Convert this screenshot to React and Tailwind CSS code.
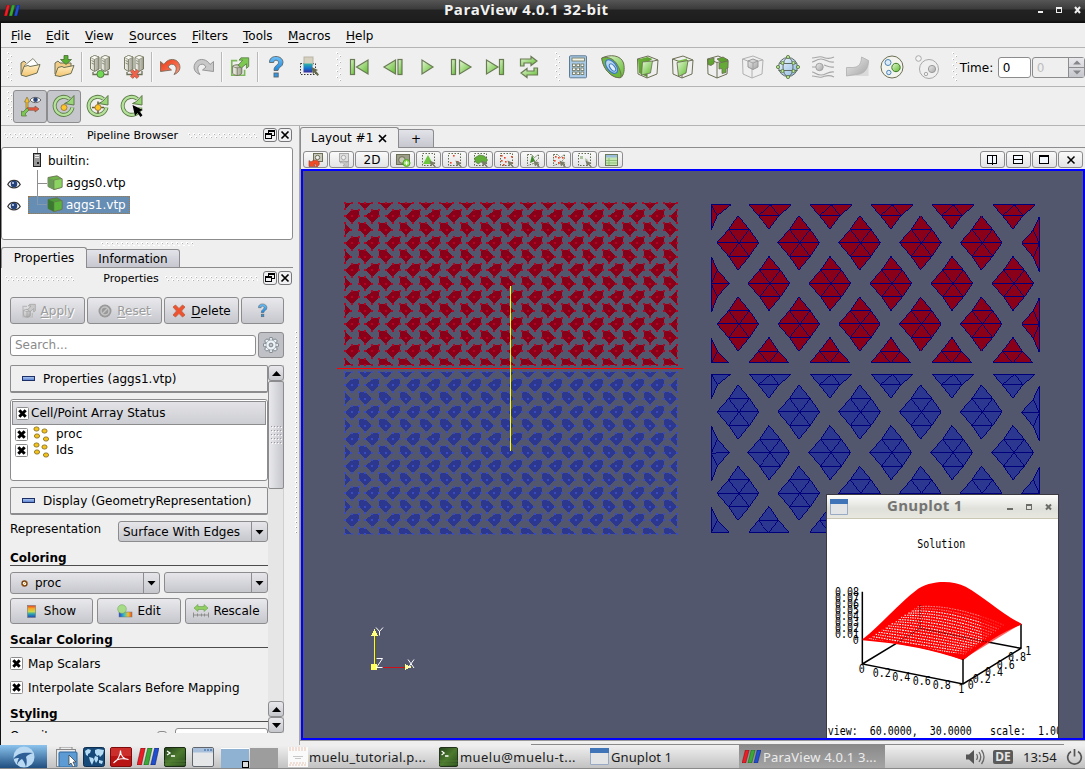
import React from "react";

const OL = "#6c6f54";

function Ic({ s = 24, w, h, children, className = "" }) {
  return (
    <svg width={w || s} height={h || s} viewBox={`0 0 ${w || s} ${h || s}`} fill="none" className={`shrink-0 ${className}`}>
      {children}
    </svg>
  );
}

/* ---------- shared definitions for gradients ---------- */
function Defs() {
  return (
    <svg width="0" height="0" className="absolute">
      <defs>
        <linearGradient id="gg" x1="0" y1="0" x2="1" y2="1">
          <stop offset="0" stopColor="#e6f7d8" />
          <stop offset="1" stopColor="#5dbb2a" />
        </linearGradient>
        <linearGradient id="gd" x1="0" y1="0" x2="1" y2="1">
          <stop offset="0" stopColor="#6db33a" />
          <stop offset="1" stopColor="#4c8f22" />
        </linearGradient>
        <linearGradient id="gf" x1="0" y1="0" x2="0" y2="1">
          <stop offset="0" stopColor="#fff0c8" />
          <stop offset="1" stopColor="#f3c46d" />
        </linearGradient>
        <linearGradient id="gs" x1="0" y1="0" x2="1" y2="0">
          <stop offset="0" stopColor="#f8f8f2" />
          <stop offset="1" stopColor="#9a9a8c" />
        </linearGradient>
        <linearGradient id="gb" x1="0" y1="0" x2="1" y2="1">
          <stop offset="0" stopColor="#f0f8ff" />
          <stop offset="1" stopColor="#8cb8e0" />
        </linearGradient>
        <linearGradient id="gq" x1="0" y1="0" x2="0" y2="1">
          <stop offset="0" stopColor="#6cc0f8" />
          <stop offset="1" stopColor="#1b87dd" />
        </linearGradient>
        <linearGradient id="gr" x1="0" y1="0" x2="1" y2="1">
          <stop offset="0" stopColor="#e83a14" />
          <stop offset=".6" stopColor="#f8684a" />
          <stop offset="1" stopColor="#f8a088" />
        </linearGradient>
        <linearGradient id="gray" x1="0" y1="0" x2="1" y2="1">
          <stop offset="0" stopColor="#ececec" />
          <stop offset="1" stopColor="#a5a5a5" />
        </linearGradient>
        <linearGradient id="rain" x1="0" y1="0" x2="0" y2="1">
          <stop offset="0" stopColor="#e2402a" />
          <stop offset=".25" stopColor="#f5a623" />
          <stop offset=".5" stopColor="#c9d84a" />
          <stop offset=".7" stopColor="#2aa6b0" />
          <stop offset="1" stopColor="#2141b8" />
        </linearGradient>
        <linearGradient id="rainh" x1="0" y1="0" x2="1" y2="0">
          <stop offset="0" stopColor="#2141d8" />
          <stop offset=".4" stopColor="#3cc0c0" />
          <stop offset=".7" stopColor="#f0c030" />
          <stop offset="1" stopColor="#e25020" />
        </linearGradient>
        <linearGradient id="palg" x1="0" y1="0" x2="0" y2="1">
          <stop offset="0" stopColor="#35b5a0" />
          <stop offset=".5" stopColor="#1478d0" />
          <stop offset="1" stopColor="#3a2a9a" />
        </linearGradient>
        <linearGradient id="term" x1="0" y1="0" x2="1" y2="1">
          <stop offset="0" stopColor="#23401a" />
          <stop offset=".5" stopColor="#4c7a2e" />
          <stop offset="1" stopColor="#2a4a1c" />
        </linearGradient>
      </defs>
    </svg>
  );
}

/* ---------- main toolbar icons ---------- */
const Folder = () => (
  <Ic>
    <path d="M3 19V8l3-2 2 2" fill="#f0cc88" stroke={OL} />
    <path d="M6 11 15 3.500l5 6L10 17z" fill="#fff" stroke="#8b8b78" />
    <path d="M3 20 6 11.500l4-1 2 1 10-2-3 8.500-11 3.500z" fill="url(#gf)" stroke={OL} />
  </Ic>
);
const FolderDown = () => (
  <Ic>
    <path d="M3 19V8l3-2 2 2 11 0v4" fill="#f0cc88" stroke={OL} />
    <path d="M3 20.500 6 12.500l4-1 2 1 10-2-3 8-11 3z" fill="url(#gf)" stroke={OL} />
    <path d="M12 .5h4v4h3.500L14 9.500 8.500 4.500H12z" fill="#58b030" stroke="#4a6b35" strokeWidth=".8" />
  </Ic>
);
function Server({ x }) {
  return (
    <g transform={`translate(${x} 0)`}>
      <path d="M1 2.500 5 .5 9.500 2v12L5 16.500 1 14z" fill="url(#gs)" stroke={OL} strokeWidth=".9" />
      <path d="M1 2.500 5 .5 9.500 2 5 4.500z" fill="#fafaf4" stroke={OL} strokeWidth=".5" />
      <path d="M5 4.500V16M2 5.500l2.500 1.200M2 8l2.500 1.200" stroke={OL} strokeWidth=".7" />
    </g>
  );
}
const Connect = () => (
  <Ic>
    <Server x={1.500} /><Server x={12} />
    <path d="M5 17v2.500h15V16" stroke={OL} strokeWidth="1.300" />
    <circle cx="12.500" cy="19" r="3.600" fill="#6edb52" stroke="#5a7a48" />
  </Ic>
);
const Disconnect = () => (
  <Ic>
    <Server x={1.500} /><Server x={12} />
    <path d="M5 17v2.500h15V16" stroke={OL} strokeWidth="1.300" />
    <path d="M9.500 15.500l6.500 7M16 15.500l-6.500 7" stroke="#8a5a48" strokeWidth="3.800" />
    <path d="M9.500 15.500l6.500 7M16 15.500l-6.500 7" stroke="#f0624c" strokeWidth="2.600" />
  </Ic>
);
const Undo = ({ gray }) => (
  <Ic>
    <g transform={gray ? "translate(24 0) scale(-1 1)" : ""}>
      <path
        d="M2.500 16.500 2.500 6.500 6 9.500C9 4 16 3 19.500 6.500c4.500 5 2.500 11-3.500 13 3-4 3-8.500-.5-10-2.500-1-4.500.5-5.500 2.500L13.500 15z"
        fill={gray ? "#c8c8c8" : "url(#gr)"}
        stroke={gray ? "#8e8e8e" : "#7a6a58"}
        strokeWidth=".9"
      />
    </g>
  </Ic>
);
const ExportBox = ({ gray, s = 24 }) => (
  <svg width={s} height={s} viewBox="0 0 24 24" fill="none" className="shrink-0">
    <path d="M9 5H3v16h14v-6" stroke={gray ? "#bbb" : "#7db85a"} strokeWidth="1.800" />
    <path d="M4 11c3-2 7-2 10 0v8c-3 3-7 3-10 0z" fill={gray ? "url(#gray)" : "url(#gs)"} stroke={gray ? "#999" : OL} />
    <path d="M4 11c3 2.500 7 2.500 10 0M9 13v8" stroke={gray ? "#999" : OL} strokeWidth=".8" />
    <path d="M10 10l5-5.500h-4L13 2h8.500v9.500l-2.500 2V8.500L13.500 13z" fill={gray ? "#c9c9c9" : "#7cc850"} stroke={gray ? "#999" : "#5a7a48"} strokeWidth=".9" />
  </svg>
);
const Question = ({ s = 24 }) => (
  <svg width={s} height={s} viewBox="0 0 24 24" fill="none" className="shrink-0">
    <path d="M5.500 7.500C5.500 3.500 8 1.500 12 1.500s7 2.500 7 6c0 4.500-5 4.500-5 8h-4c0-5.500 4.500-5 4.500-8 0-1.500-1-2.300-2.500-2.300S9.800 6 9.700 7.500z" fill="url(#gq)" stroke="#5d6468" strokeWidth=".9" />
    <rect x="10" y="18" width="4.200" height="4" fill="#2f95e4" stroke="#5d6468" strokeWidth=".9" />
  </svg>
);
const Palette = () => (
  <Ic>
    <rect x="2.500" y="8.500" width="15" height="11" stroke="#333" strokeDasharray="1.500 1.500" />
    <rect x="6" y="2" width="9" height="8" fill="#d6d0be" stroke="#b8b4a4" />
    <rect x="5.500" y="8.500" width="9" height="9" fill="url(#palg)" />
    <path d="M13.500 12l6.500 3-2 1 3 3.500-1.500 1.500-3-3.500-1.500 2z" fill="#66694c" />
  </Ic>
);
const BTN = { fill: "url(#gg)", stroke: "#6a7a55", strokeWidth: 1.2 };
const First = () => (<Ic><rect x="3.500" y="4.500" width="4" height="15" {...BTN} /><path d="M21 5v14L9.500 12z" {...BTN} /></Ic>);
const Prev = () => (<Ic><path d="M14.500 5v14L3 12z" {...BTN} /><rect x="17" y="4.500" width="4" height="15" {...BTN} /></Ic>);
const Play = () => (<Ic><path d="M7 5v14l11-7z" {...BTN} /></Ic>);
const Next = () => (<Ic><rect x="2.500" y="4.500" width="4" height="15" {...BTN} /><path d="M10.500 5v14L22 12z" {...BTN} /></Ic>);
const Last = () => (<Ic><path d="M3.500 5v14L15 12z" {...BTN} /><rect x="16.500" y="4.500" width="4" height="15" {...BTN} /></Ic>);
const Loop = () => (
  <Ic>
    <path d="M3.500 11V4h10.500V1.500l6 4.500-6 4.500V8H7v3z" {...BTN} />
    <path d="M20.500 13v7H10v2.500l-6-4.500 6-4.500V16h7v-3z" {...BTN} />
  </Ic>
);
const Calc = () => (
  <Ic>
    <rect x="3.500" y=".8" width="17" height="22" rx="1" fill="#a9cbe9" stroke="#5e7b94" />
    <rect x="6" y="3" width="12.500" height="3" fill="#f4f4e4" stroke={OL} strokeWidth=".8" />
    {[9, 13, 17].map((y) => [6.5, 10.8, 15].map((x) => <rect key={x + "-" + y} x={x} y={y} width="2.800" height="2.400" fill="#fff" stroke={OL} strokeWidth=".8" />))}
  </Ic>
);
const Contour = () => (
  <Ic>
    <path d="M.8 3C9-1 20 0 22.500 8c1.500 6 .5 12-2.500 14.500C12 24 2 15 .8 3z" fill="url(#gg)" stroke={OL} />
    <path d="M.8 3c6-2 12 1 15 6s5 10 4 13.500C12 24 2 15 .8 3z" fill="#6db83c" stroke={OL} strokeWidth=".9" />
    <ellipse cx="10.500" cy="11.500" rx="4.500" ry="8" transform="rotate(-38 10.500 11.500)" fill="#b8d6f0" stroke="#3f7cc0" strokeWidth="1.300" />
    <ellipse cx="11.500" cy="12.500" rx="2.200" ry="4.300" transform="rotate(-38 11.500 12.500)" fill="#e2f0fc" stroke="#3f7cc0" strokeWidth="1.100" />
  </Ic>
);
function Wire({ c = OL }) {
  return <path d="M1.500 4 12 1l10 4-1 14-10 4-9-4zM1.500 4 11 7.500 22 5M11 7.500V23" stroke={c} strokeWidth="1" />;
}
const Clip = () => (
  <Ic><Wire /><path d="M2 4.500 11.500 2l5 2-5.500 3.500V22l-8-4z" fill="url(#gd)" /><path d="M6.500 7 16.500 6l-2 12-9 2z" fill="url(#gg)" stroke={OL} strokeWidth=".8" /></Ic>
);
const Slice = () => (
  <Ic><Wire /><path d="M6 6 16 3.500v3L10 8.500z" fill="#7ac246" /><path d="M6 7.500 17 5.500l-2 12.500-7.500 3.500z" fill="url(#gg)" stroke={OL} strokeWidth=".9" /></Ic>
);
const Threshold = () => (
  <Ic><Wire />
    <path d="M2 4.500 8 3v5.500l-3 2-3-1zM11 4l6-2 5 3-2 2-4 1z" fill="url(#gd)" stroke={OL} strokeWidth=".8" />
    <path d="M13 8l9-2v7l-2 .5v4l-4 1v-5l-3 .5z" fill="#65aa38" stroke={OL} strokeWidth=".8" />
  </Ic>
);
const ExtractSub = () => (
  <Ic><Wire c="#b0b0b0" /><path d="M7 6l5-2 5 2v6l-5 2.500L7 12z" fill="url(#gray)" stroke="#999" /><path d="M7 6l5 2 5-2M12 8v6" stroke="#999" strokeWidth=".8" /></Ic>
);
const Glyph = () => (
  <Ic>
    <circle cx="12" cy="12" r="9.500" fill="url(#gb)" stroke="#5d6a68" />
    <ellipse cx="12" cy="12" rx="5" ry="9.500" stroke="#5d6a68" />
    <path d="M3.500 8.500h17M2.500 15.500h19" stroke="#5d6a68" />
    {[[12, 2], [2, 12], [22, 12], [12, 22], [6.5, 8], [17.5, 8], [6.5, 16], [17.5, 16]].map(([x, y]) => (
      <circle key={x + "," + y} cx={x} cy={y} r="1.600" fill="#b8e890" stroke="#5d7a48" strokeWidth=".9" />
    ))}
  </Ic>
);
const Stream = () => (
  <Ic>
    <path d="M1 3c5 0 6-2 10-1s6 3 12 0M1 7c3 0 4-3 9-3s7 4 13 3M1 12h4M13 10c3 1 6 3 10 2M1 17c3 0 4 3 9 3s7-4 13-3M1 21c5 0 6 2 10 1s6-3 12 0" stroke="#a6a6a6" strokeWidth="1.200" />
    <circle cx="8.500" cy="12" r="3.700" fill="url(#gray)" stroke="#a0a0a0" />
  </Ic>
);
const Warp = () => (
  <Ic>
    <path d="M.5 12.500h13c5 0 4-8 3.500-10l5.500 3V21H.5z" fill="#dadada" />
    <path d="M.5 12.500h6c7 0 9-5 9-10.500l7 3.500c0 9-5 14-13 14l-9 1.500z" fill="url(#gray)" stroke="#b0b0b0" strokeWidth=".8" />
  </Ic>
);
const Group = () => (
  <Ic>
    <circle cx="12" cy="12" r="11" fill="#f4f4ee" stroke={OL} />
    <circle cx="8" cy="7.500" r="3" fill="#dcebf8" stroke="#4b86b8" />
    <circle cx="8.800" cy="17.500" r="2.200" fill="#dcebf8" stroke="#4b86b8" />
    <circle cx="16" cy="12.500" r="4.200" fill="url(#gg)" stroke="#3f7a28" />
  </Ic>
);
const ExtractLevel = () => (
  <Ic>
    <circle cx="14" cy="14" r="9.500" stroke="#a8a8a8" />
    <circle cx="3.500" cy="3.500" r="2.800" stroke="#a8a8a8" fill="#f4f4f4" />
    <circle cx="11" cy="19" r="1.700" stroke="#a8a8a8" />
    <circle cx="17" cy="14" r="3.600" fill="url(#gray)" stroke="#999" />
  </Ic>
);

/* ---------- camera toolbar icons ---------- */
function Ring({ mark }) {
  return (
    <>
      <path d="M17.500 5A9 9 0 1 0 20.500 13.500" stroke="#5d7a48" strokeWidth="4" />
      <path d="M17.500 5A9 9 0 1 0 20.500 13.500" stroke="#b5e29a" strokeWidth="2.200" />
      <path d="M22 1.500v9.500l-9.500-1.500 4-2z" fill="#9ad678" stroke="#5d7a48" />
      {mark}
    </>
  );
}
const OrientAxes = () => (
  <Ic>
    <path d="M8 16V8h-1.500L9 3l2.500 5H10v8" fill="#f5c030" stroke="#8a7a40" strokeWidth=".8" />
    <path d="M9 13.800h8v-1.800l4 3-4 3v-1.800H9z" fill="#f0563a" stroke="#8a5a48" strokeWidth=".8" />
    <path d="M9 14l-4 4-1.500-1v5h5l-1.500-2L11 16z" fill="#7ac850" stroke="#5d7a48" strokeWidth=".8" />
    <path d="M12 6c2.500-3.500 8-3.500 11 0-3 3.500-8.500 3.500-11 0z" fill="#fff" stroke="#555" strokeWidth=".9" />
    <circle cx="17.500" cy="5.700" r="2.300" fill="#2c4478" />
  </Ic>
);
const Dot = <circle cx="12" cy="13.500" r="3" fill="#ffc425" stroke="#a08040" />;

/* ---------- small helpers ---------- */
function Zig({ w, h, id, vertical }) {
  return (
    <svg width={w} height={h} className="shrink-0" shapeRendering="crispEdges">
      <defs>
        <pattern id={id} width={vertical ? 6 : 5} height={vertical ? 6 : 5} patternUnits="userSpaceOnUse">
          <rect x="0" y="0" width="2" height="2" fill="#fff" />
          <rect x="1" y="1" width="1" height="1" fill="#b4b4b4" />
          <rect x={vertical ? 3 : 2} y="3" width="2" height="2" fill="#fff" />
          <rect x={vertical ? 4 : 3} y="4" width="1" height="1" fill="#b4b4b4" />
        </pattern>
      </defs>
      <rect width={w} height={h} fill={`url(#${id})`} />
    </svg>
  );
}
const Slot = ({ children, className = "w-[34px]" }) => <div className={`flex h-full shrink-0 items-center justify-center ${className}`}>{children}</div>;
const Sep = () => <div className="h-[30px] w-[2px] shrink-0 border-r border-[#fafafa] bg-[#b9b9b9]" />;
const Btn = ({ className = "", children }) => (
  <div className={`flex shrink-0 items-center justify-center rounded-[3px] border border-[#8c8c8e] bg-linear-to-b from-[#e9e9ed] to-[#c6c7cd] ${className}`}>{children}</div>
);
const U = ({ children }) => <span className="underline underline-offset-[2px]">{children}</span>;

const Bars = ({ w = 16, h = 12 }) => (
  <svg width={w} height={h} viewBox="0 0 16 12" preserveAspectRatio="none" className="shrink-0">
    <path d="M2.800 0h3.200L3.200 12H0z" fill="#ee1c25" stroke="#300" strokeWidth=".3" />
    <path d="M7.800 0h3.200L8.200 12H5z" fill="#3aa935" stroke="#030" strokeWidth=".3" />
    <path d="M12.800 0h3.200l-2.800 12H10z" fill="#1f4fd0" stroke="#003" strokeWidth=".3" />
  </svg>
);

function TitleBar() {
  return (
    <div className="relative flex h-[23px] shrink-0 items-center bg-[linear-gradient(#565656_0px,#3b3b3b_9px,#222_10px,#1e1e1e_20px,#0e0e0e_22px)]">
      <div className="ml-[4px] w-[440px] pb-[3px]"><Bars w={16} h={11} /></div>
      <span className="w-[594px] pb-[4px] font-['Open_Sans','Noto_Sans',sans-serif] text-[15px] leading-none font-bold tracking-[0.450px] whitespace-nowrap text-[#f2f2f2]">ParaView 4.0.1 32-bit</span>
      <svg width="47" height="23" shapeRendering="crispEdges" fill="none">
        <path d="M-1 12h6" stroke="#eee" strokeWidth="2" />
        <rect x="18" y="7" width="5" height="5" stroke="#eee" strokeWidth="1" transform="translate(.5 .5)" />
        <path d="M18 8.500h6" stroke="#eee" />
        <path d="M37 7l5 6M42 7l-5 6" stroke="#eee" strokeWidth="2" shapeRendering="auto" />
      </svg>
    </div>
  );
}

function MenuBar() {
  const items = [["F", "ile", "w-[35px]"], ["E", "dit", "w-[39px]"], ["V", "iew", "w-[44px]"], ["S", "ources", "w-[63px]"], ["F", "ilters", "w-[51px]"], ["T", "ools", "w-[45px]"], ["M", "acros", "w-[58px]"], ["H", "elp", "w-[40px]"]];
  return (
    <div className="flex h-[25px] shrink-0 items-center border-b border-[#b4b4b4] pt-[2px] pl-[10px]">
      {items.map(([a, b, w]) => <span key={a + b} className={`${w} shrink-0`}><U>{a}</U>{b}</span>)}
    </div>
  );
}

function ToolbarOne() {
  return (
    <div className="flex h-[39px] shrink-0 items-center border-b border-[#b4b4b4] pl-[6px]">
      <Zig id="zt1" w={6} h={30} vertical />
      <Slot><Folder /></Slot><Slot><FolderDown /></Slot><Sep />
      <Slot><Connect /></Slot><Slot><Disconnect /></Slot><Sep />
      <Slot><Undo /></Slot><Slot><Undo gray /></Slot><Sep />
      <Slot><ExportBox s={22} /></Slot><Sep />
      <Slot><Question /></Slot><Slot><Palette /></Slot>
      <div className="w-[9px] shrink-0" /><Zig id="zt2" w={6} h={30} vertical />
      {[First, Prev, Play, Next, Last, Loop].map((I, i) => <Slot key={i}><I /></Slot>)}
      <div className="w-[9px] shrink-0" /><Zig id="zt3" w={6} h={30} vertical />
      {[Calc, Contour, Clip, Slice, Threshold, ExtractSub, Glyph, Stream, Warp, Group, ExtractLevel].map((I, i) => <Slot key={i} className="w-[34.900px]"><I /></Slot>)}
      <div className="w-[7px] shrink-0" /><Zig id="zt4" w={6} h={30} vertical />
      <span className="ml-[2px] w-[36px] shrink-0 pt-[2px]">Time:</span>
      <div className="mt-[1px] ml-[2px] flex h-[21px] w-[33px] shrink-0 items-center rounded-[3px] border border-[#8c8c8e] bg-white pl-[4px]">0</div>
      <div className="mt-[1px] ml-[1px] flex h-[21px] w-[53px] shrink-0 items-center rounded-[3px] border border-[#8c8c8e] text-[#bdbdbd]">
        <span className="flex-1 pl-[4px]">0</span>
        <div className="flex h-full w-[16px] flex-col border-l border-[#8c8c8e] bg-linear-to-b from-[#e9e9ed] to-[#c6c7cd]">
          <svg width="16" height="19"><path d="M4 6.500h8L8 2.500zM4 12.500h8L8 16.500z" fill="#85858a" /><path d="M0 9.500h16" stroke="#8c8c8e" /></svg>
        </div>
      </div>
    </div>
  );
}

function ToolbarTwo() {
  const on = "border border-[#8c8c8e] rounded-[3px] bg-[#c6c7cc] !h-[33px] w-[34px]";
  return (
    <div className="flex h-[39px] shrink-0 items-center border-b border-[#b4b4b4] pl-[6px]">
      <Zig id="zt5" w={6} h={30} vertical />
      <Slot className={on}><OrientAxes /></Slot>
      <Slot className={on}><Ic><Ring mark={Dot} /></Ic></Slot>
      <Slot className="w-[34px]"><Ic><Ring mark={<><path d="M12 7.500v12M6 13.500h12" stroke="#6a5a30" strokeWidth="1.500" />{Dot}</>} /></Ic></Slot>
      <Slot className="w-[34px]"><Ic><Ring /><path d="M12.500 11l10.500 5-3.500 1.200 3 4-2 1.800-3-4-2.500 3z" fill="#000" /></Ic></Slot>
    </div>
  );
}

/* ---------- left dock ---------- */
function DockTitle({ title, id, className, gl, gr }) {
  return (
    <div className={`flex shrink-0 items-center pr-[1px] text-[11px] ${className}`}>
      <div className={gl}><Zig id={id + "l"} w={70} h={5} /></div>
      <span className="flex-1 pt-[1px] pl-[3px] text-center">{title}</span>
      <Zig id={id + "r"} w={gr} h={5} />
      <div className="ml-[5px] flex h-[14px] w-[14px] items-center justify-center rounded-[3px] border border-[#77777a] bg-[#f0f0f2]">
        <svg width="10" height="10" fill="none" stroke="#000" shapeRendering="crispEdges"><path d="M3.500 3V.5h6v5H7M3 1h7" /><rect x=".5" y="3.500" width="6" height="5" /><path d="M0 4.500h7" /></svg>
      </div>
      <div className="ml-[1px] flex h-[14px] w-[14px] items-center justify-center rounded-[3px] border border-[#77777a] bg-[#f0f0f2]">
        <svg width="10" height="10" stroke="#000" strokeWidth="1.700"><path d="M1.500 1.500l7 7M8.500 1.500l-7 7" /></svg>
      </div>
    </div>
  );
}
const Eye = () => (
  <Ic w={14} h={10}>
    <path d="M.8 5.500C3.500 0 10.500 0 13.200 5.500 10.500 10 3.500 10 .8 5.500z" fill="#fff" stroke="#333" strokeWidth="1.300" />
    <circle cx="7" cy="5" r="3.300" fill="#24427c" /><circle cx="6" cy="4" r="1" fill="#cfe0ff" />
  </Ic>
);
const Cube = ({ dark }) => (
  <Ic w={16} h={15}>
    <path d="M1 2.500 10 .8l5 3v8.500L7 14.500 1 11.500z" fill={dark ? "#4c9a3a" : "#6fb548"} stroke={OL} strokeWidth=".9" />
    <path d="M1 2.500 7 5v9.500l-6-3z" fill={dark ? "#3a7a30" : "#6a9c58"} />
    <path d="M7 5l8-1.500v8.800L7 14.500z" fill={dark ? "#5ab43c" : "#8cd462"} stroke={OL} strokeWidth=".6" />
  </Ic>
);

function Tree() {
  return (
    <div className="relative flex h-[93px] shrink-0 flex-col rounded-[3px] border border-[#8c8c8e] bg-white pt-[1px]">
      <svg className="absolute top-0 left-0" width="60" height="70" stroke="#8e8e8e" shapeRendering="crispEdges"><path d="M35.500 0v5M35.500 22v35M36 35.500h9M36 57.500h9" /></svg>
      <div className="relative flex h-[22px] items-center pl-[31px]">
        <Ic w={8} h={14}><rect x=".5" y=".5" width="7" height="13" fill="#999" stroke="#222" /><path d="M2 2.500h4M2 4.500h4" stroke="#eee" /><rect x="4" y="9" width="2" height="2" fill="#222" /></Ic>
        <span className="ml-[7px] pt-[1px]">builtin:</span>
      </div>
      <div className="relative flex h-[22px] items-center pl-[5px]"><div className="pt-[3px]"><Eye /></div><div className="ml-[26px] flex h-[18px] items-center"><Cube /><span className="ml-[3px] pt-[1px]">aggs0.vtp</span></div></div>
      <div className="relative flex h-[22px] items-center pl-[5px]">
        <div className="pt-[3px]"><Eye /></div>
        <div className="mt-[1px] ml-[7px] flex h-[18px] w-[102px] items-center border border-dotted border-[#a07840] bg-[#668db3] pl-[18px] text-white">
          <Cube dark /><span className="ml-[3px]">aggs1.vtp</span>
        </div>
        <svg className="absolute top-0 left-[28px]" width="20" height="22" stroke="#8399ae" shapeRendering="crispEdges"><path d="M7.500 2v9.500h9" fill="none" /></svg>
      </div>
    </div>
  );
}

const Check = () => (
  <Ic w={13} h={13}>
    <rect x=".5" y=".5" width="12" height="12" rx="1" fill="#fff" stroke="#8c8c8e" />
    <path d="M3.300 3.300l6.400 6.400M9.700 3.300l-6.400 6.400" stroke="#000" strokeWidth="3" />
  </Ic>
);
const Points = () => (
  <Ic w={17} h={16}>
    {[[3.5, 3], [11.5, 5], [4, 10], [13, 13]].map(([x, y]) => <ellipse key={x} cx={x} cy={y} rx="2.600" ry="2.100" fill="#f5c21a" stroke="#8a7020" strokeWidth=".9" />)}
  </Ic>
);
function Header({ children }) {
  return (
    <div className="flex h-[28px] w-[258px] shrink-0 items-center rounded-[2px] border border-b-2 border-[#8c8c8e] bg-[#efefef] pl-[11px]">
      <div className="h-[5px] w-[13px] border border-[#1c2f66] bg-linear-to-b from-[#a9c2ee] to-[#5f86d2]" />
      <span className="ml-[8px] whitespace-nowrap">{children}</span>
    </div>
  );
}
function Combo({ className, children }) {
  return (
    <div className={`flex shrink-0 items-center rounded-[3px] border border-[#8c8c8e] bg-linear-to-b from-[#e6e6ea] to-[#c6c7cd] ${className}`}>
      <div className="flex h-full flex-1 items-center border-r border-[#8c8c8e]">{children}</div>
      <svg width="15" height="8"><path d="M3.500 2h8l-4 4.500z" fill="#000" /></svg>
    </div>
  );
}
const Section = ({ children, className }) => <div className={`h-[17px] w-[258px] shrink-0 border-b border-[#4c4c4c] leading-[18px] font-bold ${className}`}>{children}</div>;

function PropertiesScroll() {
  return (
    <div className="mt-[7px] ml-[9px] flex h-[368px] w-[275px] shrink-0">
      <div className="flex w-[258px] flex-col overflow-hidden">
        <Header>Properties (aggs1.vtp)</Header>
        <div className="mt-[6px] flex h-[82px] w-[258px] shrink-0 flex-col rounded-[3px] border border-[#8c8c8e] bg-white p-px">
          <div className="mb-px flex h-[24px] shrink-0 items-center border border-[#8c8c8e] bg-linear-to-b from-[#e3e3e7] to-[#cdced3] pl-[3px]"><Check /><span className="ml-[2px]">Cell/Point Array Status</span></div>
          <div className="flex h-[16px] shrink-0 items-center pl-[3px]"><Check /><span className="ml-[5px]"><Points /></span><span className="ml-[6px]">proc</span></div>
          <div className="flex h-[16px] shrink-0 items-center pl-[3px]"><Check /><span className="ml-[5px]"><Points /></span><span className="ml-[6px]">Ids</span></div>
        </div>
        <div className="mt-[6px] shrink-0"><Header>Display (GeometryRepresentation)</Header></div>
        <div className="mt-[6px] flex h-[21px] shrink-0 items-start justify-between">
          <span className="leading-[16px]">Representation</span>
          <Combo className="h-[21px] w-[150px]"><span className="pl-[4px]">Surface With Edges</span></Combo>
        </div>
        <Section className="mt-[7px]">Coloring</Section>
        <div className="mt-[6px] flex shrink-0 items-start justify-between">
          <Combo className="h-[22px] w-[150px]">
            <svg className="ml-[9px]" width="9" height="9" viewBox="0 0 9 9"><circle cx="4.500" cy="4.500" r="2.500" fill="#fff" stroke="#7a4410" strokeWidth="1.400" /><path d="M2.700 6.300l3.600-3.600" stroke="#f0a040" /></svg>
            <span className="ml-[6px]">proc</span>
          </Combo>
          <Combo className="h-[21px] w-[104px]" />
        </div>
        <div className="mt-[4px] flex shrink-0 justify-between">
          <Btn className="h-[26px] w-[83px]"><svg width="9" height="13"><rect x=".5" y=".5" width="8" height="12" fill="url(#rain)" stroke="#777" strokeWidth=".6" /></svg><span className="ml-[8px]">Show</span></Btn>
          <Btn className="h-[26px] w-[84px]"><Ic w={16} h={14}><rect x="2" y="8" width="13" height="5" fill="url(#rainh)" stroke="#777" strokeWidth=".5" /><circle cx="5" cy="5" r="4.300" fill="#a6dc86" stroke="#7aa868" strokeWidth=".6" /></Ic><span className="ml-[4px]">Edit</span></Btn>
          <Btn className="h-[26px] w-[83px]"><Ic w={16} h={14}><path d="M1 4l4-3.500v2h6v-2L15 4l-4 3.500v-2H5v2z" fill="#90d060" stroke="#6a9a50" strokeWidth=".6" /><path d="M.5 8.500v5M4.500 9.500v3M8.500 9.500v3M11.500 9.500v3M15.500 8.500v5M0 11h16" stroke="#888" strokeWidth=".9" /></Ic><span className="ml-[4px]">Rescale</span></Btn>
        </div>
        <Section className="mt-[7px]">Scalar Coloring</Section>
        <div className="mt-[9px] flex h-[13px] shrink-0 items-center"><Check /><span className="ml-[5px]">Map Scalars</span></div>
        <div className="mt-[11px] flex h-[13px] shrink-0 items-center"><Check /><span className="ml-[5px] whitespace-nowrap">Interpolate Scalars Before Mapping</span></div>
        <Section className="mt-[11px]">Styling</Section>
        <div className="mt-[6px] flex h-[20px] shrink-0">
          <span className="w-[147px] leading-[16px]">Opacity</span>
          <div className="mt-[3px] h-[13px] w-[10px] rounded-[3px] border border-[#8c8c8e]" />
          <div className="ml-[8px] h-[20px] w-[93px] rounded-[3px] border border-[#8c8c8e] bg-white" />
        </div>
      </div>
      <div className="flex w-[16px] flex-col border-r border-[#cfcfcf] bg-[#e6e6e6]">
        <Btn className="h-[16px] w-[16px]"><svg width="9" height="5"><path d="M0 5h9L4.500 0z" /></svg></Btn>
        <div className="flex h-[108px] w-[16px] shrink-0 items-center justify-center rounded-[2px] border border-[#8c8c8e] bg-linear-to-r from-[#e9e9ed] to-[#c6c7cd]">
          <svg width="11" height="19" shapeRendering="crispEdges">{[0, 4, 8, 12, 16].map((y) => [0, 3, 6, 9].map((x) => <g key={x + "." + y}><rect x={x} y={y} width="1" height="1" fill="#9a9aa0" /><rect x={x + 1} y={y + 1} width="1" height="1" fill="#fff" /></g>))}</svg>
        </div>
        <div className="flex-1" />
        <Btn className="h-[16px] w-[16px]"><svg width="9" height="5"><path d="M0 5h9L4.500 0z" /></svg></Btn>
        <Btn className="h-[16px] w-[16px]"><svg width="9" height="5"><path d="M0 0h9L4.500 5z" /></svg></Btn>
      </div>
    </div>
  );
}

const GEAR = Array.from({ length: 8 }, (_, i) => i * 45);
function LeftDock() {
  return (
    <div className="flex w-[292px] shrink-0 flex-col">
      <DockTitle title="Pipeline Browser" id="d1" className="mb-[3px] h-[18px]" gl="ml-[3px]" gr={70} />
      <Tree />
      <div className="flex h-[7px] shrink-0 items-center justify-center"><Zig id="zs1" w={93} h={4} /></div>
      <div className="flex h-[21px] shrink-0 items-end">
        <div className="flex h-[21px] w-[86px] items-center justify-center rounded-t-[3px] border border-b-0 border-[#8c8c8e]">Properties</div>
        <div className="flex h-[19px] w-[93px] items-center justify-center rounded-tr-[3px] border border-l-0 border-[#8c8c8e] bg-linear-to-b from-[#e3e4ea] to-[#c6c7cf]">Information</div>
        <div className="flex-1 border-b border-[#8c8c8e]" />
      </div>
      <DockTitle title="Properties" id="d2" className="h-[20px]" gl="ml-[4px] w-[89px]" gr={93} />
      <div className="mt-[9px] ml-[9px] flex h-[27px] shrink-0 gap-[2px]">
        <Btn className="w-[75px] text-[#9b9b9b] [text-shadow:1px_1px_0_#fff]"><ExportBox gray s={16} /><span className="ml-[4px]"><U>A</U>pply</span></Btn>
        <Btn className="w-[75px] text-[#9b9b9b] [text-shadow:1px_1px_0_#fff]"><Ic w={14} h={14}><circle cx="7" cy="7" r="6.500" fill="#999" /><circle cx="7" cy="7" r="4" stroke="#c4c4c4" strokeWidth="1.500" /><path d="M4 10l6-6" stroke="#c4c4c4" strokeWidth="1.500" /></Ic><span className="ml-[5px]"><U>R</U>eset</span></Btn>
        <Btn className="w-[75px]"><Ic w={14} h={14}><path d="M1 3l2.500-2L7 4.500 10.500 1 13 3 9.500 7l3.500 4-2.500 2L7 9.500 3.500 13 1 11l3.500-4z" fill="#f0512e" stroke="#b86040" strokeWidth=".8" /></Ic><span className="ml-[5px]"><U>D</U>elete</span></Btn>
        <Btn className="w-[43px]"><Question s={15} /></Btn>
      </div>
      <div className="mt-[8px] ml-[9px] flex h-[26px] shrink-0 items-center">
        <div className="flex h-[21px] w-[246px] items-center rounded-[3px] border border-[#8c8c8e] bg-white pl-[4px] text-[#8a8a8a]">Search...</div>
        <div className="ml-[2px] flex h-[26px] w-[26px] items-center justify-center rounded-[3px] border border-[#8c8c8e] bg-[#c0c1c6]">
          <Ic w={16} h={16}>
            {GEAR.map((a) => <rect key={a} x="6.300" y=".6" width="3.400" height="4" rx=".8" fill="#eef3f8" stroke="#6e7880" strokeWidth=".9" transform={`rotate(${a} 8 8)`} />)}
            <circle cx="8" cy="8" r="5" fill="#eef3f8" stroke="#8a949c" strokeWidth=".6" />
            <circle cx="8" cy="8" r="1.900" fill="#bfc5ca" stroke="#707a82" strokeWidth=".9" />
          </Ic>
        </div>
      </div>
      <PropertiesScroll />
    </div>
  );
}

/* ---------- render view ---------- */
const ROWS_A = [0, 1, 2, 3, 4, 5];
const COLS = Array.from({ length: 17 }, (_, i) => i);
function SmallAggs({ dy, fill, node }) {
  const out = [];
  const add = (pts, center, key) => {
    const cl = pts.map(([x, y]) => [Math.min(Math.max(x, 30), 1025), y]);
    out.push(<polygon key={key} points={cl.map((p) => p.join(",")).join(" ")} fill={fill} />);
    cl.concat(center ? [center] : []).forEach(([x, y], i) => {
      if (x <= 1026) out.push(<rect key={key + "n" + i} x={Math.round(x / 3) * 3 - 3} y={Math.round(y / 3) * 3 - 3} width="6" height="6" fill={node} />);
    });
  };
  COLS.forEach((k) => {
    const c = 30 + 61 * k;
    const a = 51 + 61 * k;
    add([[c - 20, 39], [c, 39], [c + 20, 39], [c, 58]], null, "t" + k);
    ROWS_A.forEach((r) => {
      const y = 79 + 81 * r;
      add([[a, y - 19], [a + 21, y - 19], [a + 21, y], [a, y + 20], [a - 21, y]], [a, y], `a${k}.${r}`);
      if (r < 5) add([[c - 19, y + 20], [c, y + 20], [c + 19, y + 40], [c, y + 59], [c - 19, y + 40]], [c, y + 40], `b${k}.${r}`);
    });
    add([[c - 20, 507], [c, 507], [c + 20, 525], [c, 525], [c - 20, 525]], null, "z" + k);
  });
  return <g transform={`translate(0 ${dy})`}>{out}</g>;
}
function BigAggs({ dy, fill }) {
  const diamonds = [];
  [0, 1, 2, 3, 4].forEach((k) => {
    [[114 + 182.5 * k, 143], [207 + 183 * k, 265], [114 + 182.5 * k, 387]].forEach(([x, y], i) => diamonds.push([x, y, k + "-" + i]));
  });
  const p = { fill, stroke: "#00007c", strokeWidth: 3 };
  return (
    <g transform={`translate(0 ${dy})`} {...p}>
      {diamonds.map(([x, y, k]) => (
        <path key={k} transform={`translate(${x} ${y})`} d="M0-81 34-40 62 0 34 41 0 82-28 41-63 0-28-40zM-28-40H34M-63 0H62M-28 41H34M-28-40 34 41M34-40-28 41" />
      ))}
      {[0, 1, 2, 3, 4].map((k) => (
        <g key={k}>
          <path transform={`translate(${210 + 183 * k} 30)`} d="M-62 0H64L27 32-3 72-35 32zM-35 32H27M2 0-35 32M2 0 27 32" />
          <path transform={`translate(${207 + 183 * k} 504)`} d="M-61 0H61L28-35 0-77-32-35zM-32-35H28M0 0-32-35M0 0 28-35" />
        </g>
      ))}
      <path d="M34 30H92L52 62 34 104zM34 30 52 62" />
      <path d="M34 185 52 225 88 265 52 305 34 352zM34 267 88 265M34 267 52 225M34 267 52 305" />
      <path d="M34 430 52 468 86 504H34zM34 504 52 468" />
      <path d="M1018 65 1000 105 965 144 1000 187 1018 230zM1018 146 965 144M1018 146 1000 105M1018 146 1000 187" />
      <path d="M1018 308 1000 347 965 387 1000 430 1018 472zM1018 388 965 387M1018 388 1000 347M1018 388 1000 430" />
    </g>
  );
}

function Surface() {
  const lines = [];
  for (let i = 1; i < 17; i++) {
    const t = i / 17;
    const x0 = 140 + 165 * t, y0 = 452 - 108 * t;
    const x1 = 432 + 130 * t, y1 = 498 - 98 * t;
    const bow = 14 + 44 * t;
    lines.push(<path key={i} d={`M${x0} ${y0}Q${(x0 + x1) / 2 - 20} ${(y0 + y1) / 2 - bow + 18} ${x1} ${y1}`} stroke="#fff" strokeWidth="3.200" strokeDasharray={i % 2 ? "4 3" : "5 3"} strokeDashoffset={i * 2} fill="none" opacity={t > 0.85 ? 0.5 : 1} />);
  }
  return (
    <g>
      <path d="M131 448C190 400 240 340 290 302 330 270 400 270 440 290 490 318 550 372 608 402 540 425 480 470 432 510 350 480 250 460 131 448z" fill="#f00" />
      {lines}
      <path d="M480 340 606 402 432 508 395 495 490 455z" fill="#f00" opacity=".6" />
      <path d="M131 448C250 458 350 478 432 508 480 470 540 425 606 402" fill="none" stroke="#f00" strokeWidth="5" />
    </g>
  );
}

function PlotText({ x, y, children }) {
  return <text transform={`translate(${x} ${y + 12}) scale(1 1.25)`} textAnchor="middle" fontSize="30" fontFamily="'DejaVu Sans Mono', monospace">{children}</text>;
}
function Gnuplot() {
  const T = PlotText;
  return (
    <div className="absolute top-[323px] left-[523px] flex h-[245px] w-[233px] flex-col border border-[#3a3a40] bg-white">
      <div className="flex h-[24px] shrink-0 items-center border-b border-[#c9c6b4] bg-[linear-gradient(#fdfdfc,#dfe0da_60%,#e8e8e0)]">
        <svg className="ml-[3px]" width="18" height="16"><rect width="18" height="16" fill="#e3e4e6" /><rect width="18" height="5" fill="#3f74b8" /><path d="M.5 5v10.500h17V5" fill="none" stroke="#98aac4" /></svg>
        <span className="ml-[39px] w-[75px] pb-[2px] font-['Open_Sans','Noto_Sans',sans-serif] text-[15px] leading-none font-bold tracking-[0.300px] whitespace-nowrap text-[#747472]">Gnuplot 1</span>
        <svg className="ml-[44px]" width="50" height="12" shapeRendering="crispEdges" fill="none" stroke="#6b6b68"><path d="M1 8h6" strokeWidth="2" /><rect x="20.500" y="3.500" width="5" height="5" /><path d="M20 4.500h6" /><path d="M40 3.500l5 5M45 3.500l-5 5" strokeWidth="2" shapeRendering="auto" /></svg>
      </div>
      <svg width="231" height="219" viewBox="24 87 693 657">
        <g stroke="#000" strokeWidth="4.500" fill="none">
          <path d="M130 305V522L432 582 606 475V402M130 522 237 457M510 457 606 475" />
        </g>
        <Surface />
        <path d="M432 508V582" stroke="#000" strokeWidth="4.500" />
        <path d="M237 457 303 415M303 345V415L510 457" stroke="#200" strokeWidth="3" strokeDasharray="4 5" fill="none" />
        {[1, 2, 3, 4, 5, 6, 7, 8].map((k) => <T key={k} x={84} y={450 - 18 * k}>{`0.0${k}`}</T>)}
        <T x={110} y={451}>0</T>
        <T x={128} y={537}>0</T><T x={188} y={548}>0.2</T><T x={247} y={561}>0.4</T><T x={308} y={573}>0.6</T><T x={368} y={585}>0.8</T><T x={427} y={597}>1</T>
        <T x={455} y={586}>0</T><T x={488} y={567}>0.2</T><T x={525} y={545}>0.4</T><T x={560} y={524}>0.6</T><T x={594} y={502}>0.8</T><T x={628} y={484}>1</T>
        <T x={367} y={162}>Solution</T>
        <text transform="translate(26 735) scale(1 1.25)" fontSize="30" fontFamily="'DejaVu Sans Mono', monospace" xmlSpace="preserve" className="whitespace-pre">{"view:  60.0000,  30.0000   scale:  1.00"}</text>
      </svg>
    </div>
  );
}

function RenderView() {
  return (
    <div className="relative h-[571px] w-[784px] shrink-0 overflow-hidden border-2 border-[#0000ff] bg-[#52576e]">
      <svg width="780" height="567" viewBox="303 171 780 567" className="block" shapeRendering="crispEdges">
        <g transform="translate(335 190) scale(.33333)">
          <SmallAggs dy={0} fill="#8b0019" node="#b40426" />
          <SmallAggs dy={507} fill="#2c378f" node="#3b4cc0" />
        </g>
        <g transform="translate(700 195) scale(.33333)">
          <BigAggs dy={0} fill="#8b0019" />
          <BigAggs dy={507.5} fill="#2c378f" />
        </g>
        <rect x="337" y="368" width="346" height="1" fill="#f00" />
        <rect x="510" y="286" width="1" height="165" fill="#ffff00" />
        <rect x="374" y="634" width="1" height="32" fill="#ffff00" />
        <path d="M374.500 628.500l3.500 7.500h-7z" fill="#ffff80" />
        <rect x="371" y="664" width="6" height="6" fill="#ffff60" />
        <rect x="383" y="667" width="22" height="1" fill="#d01018" />
        <path d="M405 664v6l7-3z" fill="#ffff90" />
        <g stroke="#fff" fill="none" shapeRendering="auto">
          <path d="M376 627.500l3.500 4 3.500-4M379.500 631v4.500" /><path d="M376.500 658.500h6l-6 9h6" /><path d="M408 659.500l6 8.500M414 659.500l-6 8.500" />
        </g>
      </svg>
      <Gnuplot />
    </div>
  );
}

/* ---------- view toolbar icons ---------- */
const Cam = ({ arrow, gray }) => (
  <Ic w={16} h={16}>
    <rect x="5.500" y="1.500" width="9" height="8" fill={gray ? "#ddd" : "#c9c9bc"} stroke={gray ? "#aaa" : OL} />
    <circle cx="9.500" cy="5.500" r="2.200" fill="#eee" stroke={gray ? "#aaa" : OL} />
    <path d={gray ? "M14.500 14.500V9l-2 1.500C10 8 7 9 6 11c2-.5 3.500 0 4.500 1l-1.500 2z" : "M1 14.500V8.500l2 1.500C5.500 7.500 9.500 7.500 11 10c1 2 0 4-3 5.500 1-3-.5-4-2-3.500l1.500 2.500z"} fill={arrow} stroke={gray ? "#999" : "#8a4030"} strokeWidth=".6" />
  </Ic>
);
const CamZoom = () => (
  <Ic w={16} h={16}><rect x="1.500" y="2.500" width="13" height="10" fill="#9d9d8c" stroke={OL} /><circle cx="7" cy="8" r="3.300" fill="#c8c8ba" stroke={OL} /><circle cx="11.500" cy="11" r="3.500" fill="#8ee058" stroke="#4fa028" /><path d="M11.500 9v4M9.500 11h4" stroke="#fff" /></Ic>
);
function Sel({ frustum, children }) {
  return (
    <Ic w={16} h={16}>
      {frustum ? <path d="M2.500 2.500h4l3 3 4-3v4l-2 2 2 3v3l-5-3-6 2z" stroke="#5d6a4c" strokeDasharray="1.500 1.200" /> : <rect x="1.500" y="1.500" width="12" height="12" stroke="#5d6a4c" strokeDasharray="1.500 1.500" />}
      {children}
      <path d="M8.500 8.500l6 2.500-2 1 2.500 3-1 .8-2.500-3-1.500 1.700z" fill="#7a7d68" />
    </Ic>
  );
}
const Tri = <path d="M7 3l5 9H2z" fill="#6cc63e" />;
const redDots = (pts) => pts.map(([x, y]) => <rect key={x + "," + y} x={x} y={y} width="1.600" height="1.600" fill="#f04020" />);
const ViewIcons = [
  <CamZoom />,
  <Sel>{Tri}</Sel>,
  <Sel><path d="M7 4l4 7H3z" fill="#eee" />{redDots([[6, 3], [3, 10], [10, 9]])}</Sel>,
  <Sel><path d="M1.500 6l5-3 5 1 3 4-2 3-5-1-2 2-3-2z" fill="#62b038" stroke="#55793c" strokeWidth=".7" /></Sel>,
  <Sel>{redDots([[2, 3], [5, 5], [2, 8], [6, 9], [12, 4], [12, 10], [4, 12]])}</Sel>,
  <Sel frustum><path d="M7 3l3 6-5 2z" fill="#3f8a28" /></Sel>,
  <Sel frustum>{redDots([[4, 4], [7, 5], [3, 8], [7, 10], [11, 5]])}</Sel>,
  <Sel><path d="M3 4h3v3H3zM8 6l3 2-2 3z" fill="#9ab88a" opacity=".8" /></Sel>,
  <Ic w={16} h={16}><rect x="2.500" y="2.500" width="12" height="11" fill="#c4e6b0" stroke="#6a7a5a" /><rect x="3" y="3" width="11" height="2.500" fill="#9cbede" /><path d="M3 8.500h11M3 11h11M6 6v7" stroke="#8fbf78" /></Ic>,
];
function VBtn({ className = "w-[25px]", children }) {
  return <div className={`flex h-[17px] shrink-0 items-center justify-center overflow-hidden rounded-[3px] border border-[#8c8c8e] bg-linear-to-b from-[#fafafa] to-[#e3e3e5] ${className}`}>{children}</div>;
}
function CenterPane() {
  const winIcons = ["M5.500 0v10", "M0 5.500h10", "M0 1.500h10"];
  return (
    <div className="flex w-[785px] shrink-0 flex-col">
      <div className="flex h-[22px] shrink-0 items-end">
        <div className="flex h-[21px] w-[99px] items-center rounded-t-[3px] border border-b-0 border-[#8c8c8e] pl-[10px] whitespace-nowrap">Layout #1
          <svg className="ml-[5px]" width="9" height="9" stroke="#000" strokeWidth="1.700"><path d="M1 1l7 7M8 1l-7 7" /></svg>
        </div>
        <div className="flex h-[19px] w-[35px] items-center justify-center rounded-tr-[3px] border border-l-0 border-[#8c8c8e] bg-linear-to-b from-[#e3e4ea] to-[#c6c7cf]">+</div>
        <div className="flex-1 border-b border-[#8c8c8e]" />
      </div>
      <div className="flex h-[21px] shrink-0 items-center gap-[1px] border-l border-[#8c8c8e] pt-[2px] pr-[2px] pl-[2px]">
        <VBtn><Cam arrow="#f04a26" /></VBtn><VBtn><Cam arrow="#c4c4c4" gray /></VBtn>
        <VBtn className="w-[34px]">2D</VBtn>
        {ViewIcons.map((v, i) => <VBtn key={i}>{v}</VBtn>)}
        <div className="flex-1" />
        {winIcons.map((d, i) => <VBtn key={i}><svg width="11" height="11" fill="none" stroke="#000" shapeRendering="crispEdges"><rect x=".5" y="1.500" width="9" height="8" fill="#f4f8ff" /><path d={d} transform={i === 0 ? "translate(-.5 1)" : i === 2 ? "translate(0 1)" : ""} /><path d="M0 1.500h10" /></svg></VBtn>)}
        <VBtn><svg width="10" height="10" stroke="#000" strokeWidth="1.500"><path d="M1.500 1.500l7 7M8.500 1.500l-7 7" /></svg></VBtn>
      </div>
      <div className="border-b border-l border-[#9a9a9a]"><RenderView /></div>
      <div className="mt-[3px] ml-[231px] h-px w-[533px] bg-[#8a8a8a]" />
    </div>
  );
}

/* ---------- task bar ---------- */
const TermIcon = ({ s = 22 }) => (
  <svg width={s} height={20} viewBox="0 0 22 20" preserveAspectRatio="none" className="shrink-0"><rect x=".5" y=".5" width="21" height="19" rx="1.500" fill="url(#term)" stroke="#1a2a14" /><path d="M3 4l3 2-3 2M7 9h4" stroke="#fff" fill="none" strokeWidth="1.300" /><path d="M0 14h22M0 17h22" stroke="#5c8a3c" strokeWidth=".6" /></svg>
);
function TaskBar() {
  return (
    <div className="flex h-[24px] w-[1085px] shrink-0 items-center border-b border-[#8a8a8a] bg-linear-to-b from-[#f0f0f0] to-[#c2c2c2] font-['Noto_Sans','Open_Sans',sans-serif] text-[13px] text-[#1c1c1c]">
      <div className="flex h-full w-[47px] shrink-0 items-center justify-center bg-linear-to-b from-[#8cc4ee] to-[#1f4f80]">
        <svg width="22" height="22"><circle cx="11" cy="11" r="10.500" fill="#b9d9f2" /><path d="M1 12c4-5 9-6 19-5-3 1-6 2-7 4 1 3 1 6 0 10-1-4-3-7-4-8-2 1-4 3-5 6 0-3 1-5 2-7-2 0-4 0-5 1z" fill="#2d5f96" /></svg>
      </div>
      <svg className="ml-[9px] shrink-0" width="22" height="20"><rect x="4" y="0" width="12" height="6" fill="#eee" stroke="#888" /><rect x=".5" y="2.500" width="19" height="17" fill="#e9eaec" stroke="#888" /><rect x="3" y="5" width="18" height="15" rx="1" fill="#5d9bd4" stroke="#2f659a" /><path d="M13 8l7 7h-3l2 4-2 1-2-4-2 2z" fill="#fff" stroke="#333" strokeWidth=".7" /></svg>
      <svg className="ml-[5px] shrink-0" width="22" height="20"><rect x=".5" y=".5" width="21" height="19" rx="2" fill="#174a78" stroke="#0e2f50" /><path d="M2 4l3-2 3 1-1 3-2 1v2L3 8zM6 10l4 1 1 2-2 5-2-4zM12 3l3-1 6 1-1 4-3 3-1-2-2 1-2-3zM12 9l3 1v3l-2 3-2-4zM16 13l4 1-1 3-3-1z" fill="#b6dcf4" /></svg>
      <svg className="ml-[5px] shrink-0" width="22" height="20"><rect x=".5" y=".5" width="21" height="19" rx="1.500" fill="#b81414" stroke="#7c0c0c" /><rect x="1" y="1" width="20" height="8" fill="#d43a34" opacity=".7" /><path d="M3.500 16c4-2 7-8 7-12.500M10.500 3.500c0 5 3 9 8 9M3.500 16c3-4 9-5 15-3.500" stroke="#fff" fill="none" strokeWidth="1.100" /></svg>
      <div className="ml-[5px] w-[22px]"><Bars w={22} h={17} /></div>
      <div className="ml-[5px]"><TermIcon /></div>
      <svg className="ml-[6px] shrink-0" width="22" height="20"><rect x=".5" y=".5" width="21" height="19" rx="1.500" fill="#e4e6e8" stroke="#60666c" /><rect x="1" y="1" width="20" height="4.500" fill="#a8c0dc" /><path d="M12 3h2M15 3h2M18 3h2" stroke="#2a5a9a" /></svg>
      <div className="mt-[2px] ml-[7px] flex h-[20px] w-[28px] items-end justify-end border-t border-[#fff] bg-[#8fb2d2]"><div className="h-[7px] w-[7px] border border-black bg-[#ddd]" /></div>
      <div className="mt-[2px] ml-[1px] h-[20px] w-[28px] bg-[#9d9d9d]" />
      <svg className="ml-[10px] shrink-0" width="20" height="20"><rect width="20" height="20" fill="#fafafa" /><path d="M1 1h18M1 3h18M2 16h16M1 18h18" stroke="#e6c4b4" strokeWidth="1.200" strokeDasharray="2 1" /><path d="M5 9.500h10M7 11.500h6" stroke="#bbb" strokeWidth=".8" /></svg>
      <span className="ml-[1px] w-[130px] shrink-0 whitespace-nowrap tracking-[0.300px]">muelu_tutorial.p...</span>
      <TermIcon s={19} />
      <span className="ml-[2px] w-[130px] shrink-0 whitespace-nowrap tracking-[0.450px]">muelu@muelu-t...</span>
      <svg width="19" height="17" className="shrink-0"><rect width="19" height="17" fill="#e3e4e6" /><rect width="19" height="5" fill="#3f74b8" /><path d="M.5 5v11.500h18V5" fill="none" stroke="#98aac4" /></svg>
      <span className="ml-[2px] w-[128px] shrink-0 tracking-[0.100px]">Gnuplot 1</span>
      <div className="flex h-full w-[146px] shrink-0 items-center bg-linear-to-b from-[#8a8a8a] to-[#a4a4a4] pl-[3px] text-[#ececec]">
        <Bars w={19} h={13} /><span className="ml-[2px] whitespace-nowrap tracking-[0.200px]">ParaView 4.0.1 3...</span>
      </div>
      <svg className="ml-[80px] shrink-0" width="21" height="18" fill="none" stroke="#6a6a6a" strokeWidth="1.300"><path d="M1 6.500h3L9 2v14L4 11.500H1z" fill="#555" stroke="none" /><path d="M11.500 6q2 3 0 6M14 4q3.500 5 0 10M16.500 2q5 7 0 14" /></svg>
      <div className="ml-[7px] flex h-[14px] w-[20px] shrink-0 items-center justify-center rounded-[2px] bg-[#5a5a5a] text-[12px] leading-none font-bold text-[#e6e6e6]">DE</div>
      <span className="ml-[10px] w-[43px] shrink-0 tracking-[0.100px]">13:54</span>
      <svg width="17" height="18" fill="none" stroke="#555" strokeWidth="1.700" className="shrink-0"><path d="M5 3.500a6.800 6.800 0 1 0 7 0M8.500 1v7.500" /></svg>
    </div>
  );
}

export default function App() {
  return (
    <div className="flex h-[769px] w-[1085px] flex-col overflow-hidden bg-[#efefef] font-['DejaVu_Sans',sans-serif] text-[12px] leading-[16px] text-black">
      <Defs />
      <TitleBar />
      <div className="flex h-[722px] shrink-0 flex-col overflow-hidden border-l border-[#111]">
        <MenuBar />
        <ToolbarOne />
        <ToolbarTwo />
        <div className="flex h-[619px] shrink-0">
          <LeftDock />
          <div className="flex w-[7px] shrink-0 justify-center border-r border-[#a9a9a9]">
            <svg width="3" height="420" shapeRendering="crispEdges">{Array.from({ length: 41 }, (_, i) => <g key={i}><rect x="0" y={205 + i * 5} width="2" height="2" fill="#fff" /><rect x="1" y={206 + i * 5} width="1" height="1" fill="#999" /></g>)}</svg>
          </div>
          <CenterPane />
        </div>
      </div>
      <TaskBar />
    </div>
  );
}
